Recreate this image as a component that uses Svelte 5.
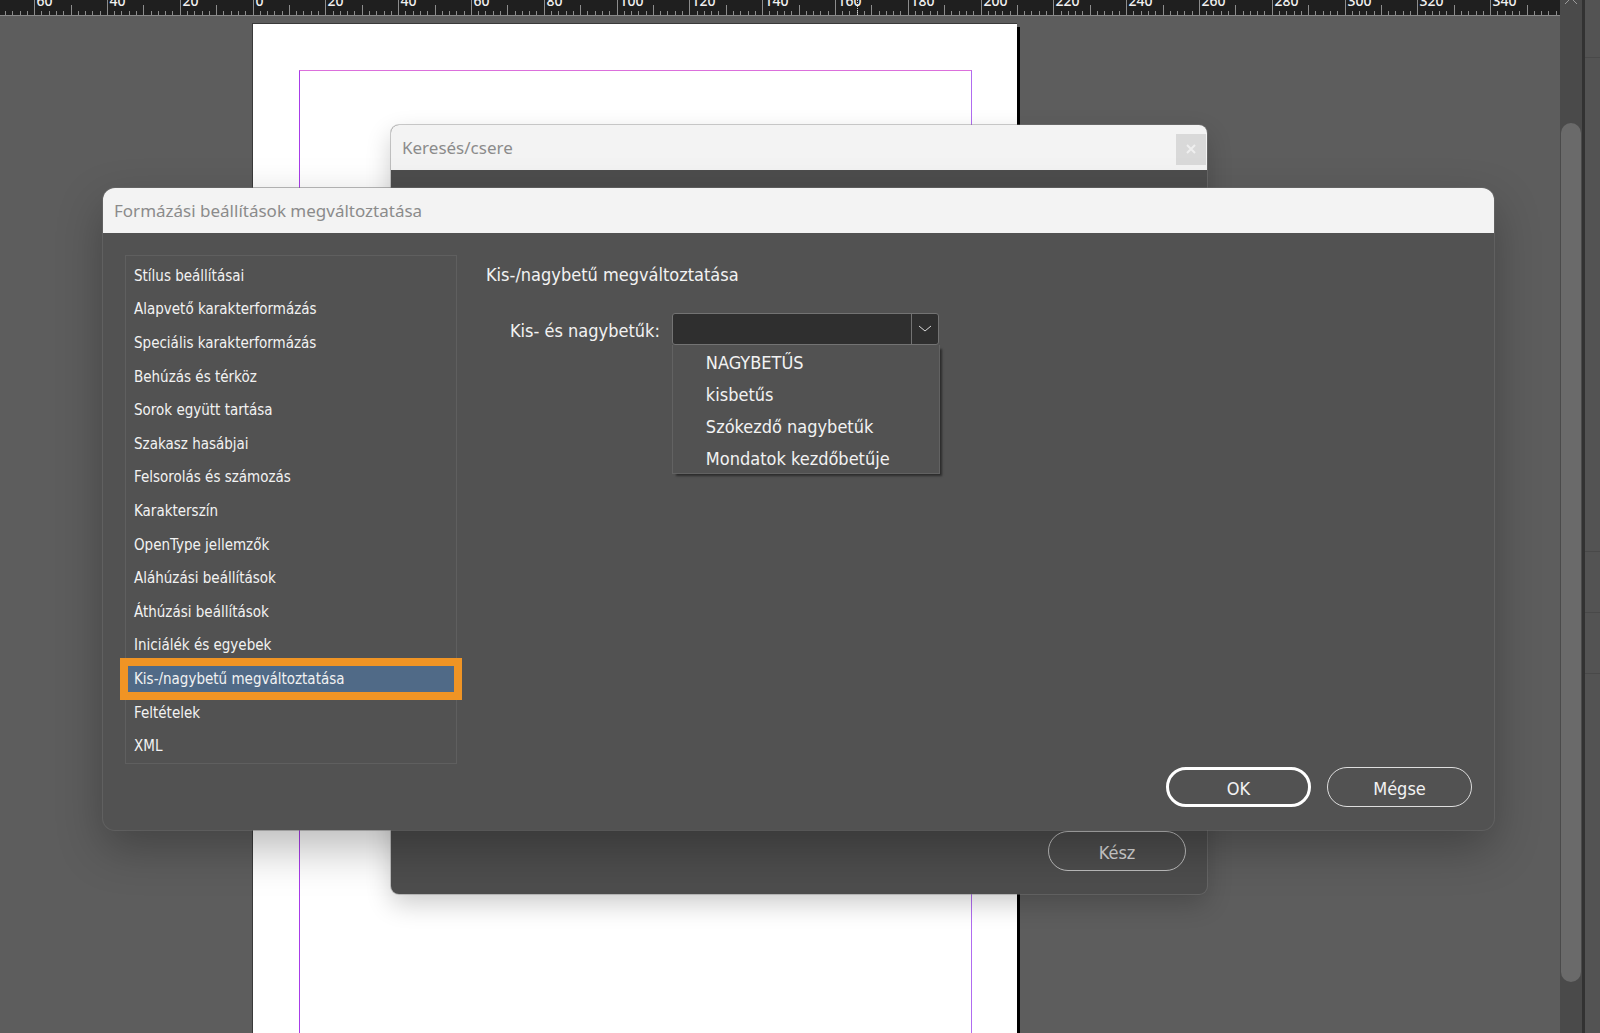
<script lang="ts">
    /** Zero point of the ruler and the distance of one millimetre on screen. */
    const origin = 253;
    const mm = 3.64;

    const majors = Array.from({ length: 21 }, (_, i) => (i - 3) * 20);
    const minors = Array.from({ length: 215 }, (_, i) => (i - 35) * 2);
    const middles = Array.from({ length: 22 }, (_, i) => (i - 3) * 20 - 10);

    const categories = [
        "Stílus beállításai",
        "Alapvető karakterformázás",
        "Speciális karakterformázás",
        "Behúzás és térköz",
        "Sorok együtt tartása",
        "Szakasz hasábjai",
        "Felsorolás és számozás",
        "Karakterszín",
        "OpenType jellemzők",
        "Aláhúzási beállítások",
        "Áthúzási beállítások",
        "Iniciálék és egyebek",
        "Kis-/nagybetű megváltoztatása",
        "Feltételek",
        "XML",
    ];

    const cases = ["NAGYBETŰS", "kisbetűs", "Szókezdő nagybetűk", "Mondatok kezdőbetűje"];

    let selected = $state(12);
    let letterCase = $state("");
    let open = $state(true);

    function tick(value: number) {
        return Math.floor(origin + value * mm) + 0.5;
    }

    function choose(value: string) {
        letterCase = value;
        open = false;
    }
</script>

<div class="app">
    <main class="workspace">
        <svg class="ruler" aria-hidden="true">
            {#each minors as value}
                <line class="tick" x1={tick(value)} x2={tick(value)} y1="11" y2="15" />
            {/each}
            {#each middles as value}
                <line class="tick" x1={tick(value)} x2={tick(value)} y1="5" y2="15" />
            {/each}
            {#each majors as value}
                <line class="tick" x1={tick(value)} x2={tick(value)} y1="0" y2="15" />
                <text x={tick(value) + 2} y="6">{Math.abs(value)}</text>
            {/each}
            <line class="cursor" x1="857.5" x2="857.5" y1="0" y2="15" />
        </svg>
        <div class="pasteboard">
            <div class="page">
                <div class="margins"></div>
            </div>
        </div>
    </main>

    <div class="scrollbar">
        <svg width="14" height="8" viewBox="0 0 14 8" aria-hidden="true">
            <path d="M1 7 7 1l6 6" />
        </svg>
        <div class="thumb"></div>
    </div>
    <aside class="dock">
        <div></div>
        <div></div>
        <div></div>
        <div></div>
    </aside>

    <section class="window find" aria-label="Keresés/csere">
        <header>
            <h2>Keresés/csere</h2>
            <button class="close" aria-label="Bezárás">
                <svg width="10" height="10" viewBox="0 0 10 10"><path d="m1 1 8 8M9 1 1 9" /></svg>
            </button>
        </header>
        <footer>
            <button class="pill">Kész</button>
        </footer>
    </section>

    <section class="window format" aria-label="Formázási beállítások megváltoztatása">
        <header>
            <h2>Formázási beállítások megváltoztatása</h2>
        </header>
        <div class="body">
            <ul class="categories">
                {#each categories as category, i}
                    <li class:selected={selected === i}>
                        <button onclick={() => (selected = i)}>{category}</button>
                    </li>
                {/each}
            </ul>
            <div class="panel">
                <h3>{categories[selected]}</h3>
                <div class="field">
                    <label for="case">Kis- és nagybetűk:</label>
                    <div class="combo">
                        <select id="case" bind:value={letterCase}>
                            <option value=""></option>
                            {#each cases as item}
                                <option>{item}</option>
                            {/each}
                        </select>
                        <span class="arrow">
                            <svg width="14" height="8" viewBox="0 0 14 8" aria-hidden="true">
                                <path d="m1 1 6 5 6-5" />
                            </svg>
                        </span>
                        {#if open}
                            <div class="menu">
                                {#each cases as item}
                                    <button onclick={() => choose(item)}>{item}</button>
                                {/each}
                            </div>
                        {/if}
                    </div>
                </div>
            </div>
        </div>
        <footer>
            <button class="pill primary">OK</button>
            <button class="pill">Mégse</button>
        </footer>
    </section>
</div>

<style>
    :global(body) {
        background: #5d5d5d;
    }

    .app {
        position: relative;
        display: grid;
        grid-template-columns: 1fr 22px 18px;
        height: 100vh;
        overflow: hidden;
        color: #f2f2f2;
        font-family: "DejaVu Sans Condensed", "Noto Sans", sans-serif;
        font-size: 18px;
    }

    h2,
    h3 {
        margin: 0;
        font-weight: 400;
    }

    button,
    select {
        box-sizing: border-box;
        margin: 0;
        color: inherit;
        font: inherit;
    }

    .workspace {
        display: flex;
        flex-direction: column;
        min-width: 0;
    }

    .ruler {
        display: block;
        flex: none;
        box-sizing: border-box;
        width: 100%;
        height: 16px;
        border-bottom: 1px solid #8a8a8a;
        background: #1f1f1f;
    }

    .tick {
        stroke: #8c8c8c;
    }

    .cursor {
        stroke: #d0d0d0;
        stroke-dasharray: 1 1;
    }

    .ruler text {
        fill: #f0f0f0;
        font-family: "Noto Sans", sans-serif;
        font-size: 14px;
        font-weight: 500;
    }

    .pasteboard {
        position: relative;
        flex: 1;
        overflow: hidden;
        background: #5d5d5d;
    }

    .page {
        position: absolute;
        top: 7px;
        bottom: -60px;
        left: 252px;
        box-sizing: border-box;
        width: 765px;
        border: 1px solid #3a3a3a;
        border-right: 0;
        background: #fff;
        box-shadow: 3px 4px 0 #000;
    }

    .margins {
        height: 100%;
        margin: 46px 45px 0 46px;
        border: 1px solid #b06cf0;
        border-top-color: #dc70dc;
        border-left-color: #a83ce8;
    }

    .scrollbar {
        display: flex;
        flex-direction: column;
        align-items: center;
        overflow: hidden;
        background: #4a4a4a;
    }

    .scrollbar svg {
        flex: none;
        margin: -3px 0 118px;
    }

    .thumb {
        flex: 1;
        width: 20px;
        margin-bottom: 51px;
        border-radius: 10px;
        background: #6a6a6a;
    }

    .dock {
        display: grid;
        grid-template-rows: 58px 494px 61px 61px;
        border-left: 3px solid #323232;
        background: #535353;
    }

    .dock div {
        box-sizing: border-box;
        border-bottom: 1px solid #494949;
    }

    svg path {
        fill: none;
        stroke: #9a9a9a;
    }

    .window {
        position: absolute;
        display: flex;
        flex-direction: column;
        overflow: hidden;
        background: #525252;
    }

    .window header {
        display: flex;
        align-items: center;
        justify-content: space-between;
        height: 45px;
        padding: 0 1px 0 11px;
        background: #f3f3f3;
        color: #8b8b8b;
    }

    .window h2 {
        font-family: "Noto Sans", sans-serif;
        font-size: 17px;
        line-height: 24px;
    }

    .window footer {
        display: flex;
        justify-content: flex-end;
        gap: 16px;
        margin-top: auto;
        padding: 0 22px 23px;
    }

    .find {
        top: 125px;
        left: 391px;
        width: 816px;
        min-height: 769px;
        border-radius: 8px;
        background: #4d4d4d;
        box-shadow: 0 0 0 1px rgba(128, 128, 128, 0.4), 0 10px 26px rgba(0, 0, 0, 0.2);
    }

    .find footer {
        padding-right: 21px;
    }

    .find .pill {
        width: 138px;
        border-color: #bdbdbd;
        color: #d6d6d6;
    }

    .close {
        display: grid;
        place-items: center;
        width: 30px;
        height: 31px;
        margin-top: 3px;
        padding: 0;
        border: 0;
        background: #d9d9d9;
    }

    .close path {
        stroke: #efefef;
        stroke-width: 2;
    }

    .format {
        top: 188px;
        right: 106px;
        left: 103px;
        border-radius: 12px;
        box-shadow: 0 0 0 1px rgba(112, 112, 112, 0.5), 0 18px 46px rgba(0, 0, 0, 0.28);
    }

    .body {
        display: flex;
        gap: 29px;
        padding: 22px 22px 3px;
    }

    .categories {
        display: grid;
        grid-auto-rows: 1fr;
        box-sizing: border-box;
        width: 332px;
        height: 509px;
        margin: 0;
        padding: 3px 0 0;
        border: 1px solid #5f5f5f;
        font-size: 15px;
        list-style: none;
    }

    .categories li {
        position: relative;
        display: flex;
        align-items: center;
        padding: 0 2px;
    }

    .categories button {
        width: 100%;
        height: 28px;
        padding: 0 6px;
        border: 0;
        background: none;
        text-align: left;
    }

    .selected button {
        background: #506a87;
    }

    .selected::after {
        position: absolute;
        inset: -4px -6px;
        border: 8px solid #f09424;
        content: "";
        pointer-events: none;
    }

    .panel {
        flex: 1;
        padding-top: 8px;
    }

    .panel h3 {
        font-size: 18px;
        line-height: 24px;
    }

    .field {
        display: flex;
        align-items: center;
        gap: 12px;
        margin-top: 26px;
        padding-left: 24px;
    }

    .field label {
        padding-top: 2px;
    }

    .combo {
        position: relative;
        display: grid;
        width: 267px;
    }

    .combo select {
        grid-area: 1 / 1;
        height: 32px;
        padding: 0 36px 0 8px;
        border: 1px solid #737373;
        border-radius: 3px;
        background: #2f2f2f;
        appearance: none;
    }

    .arrow {
        display: grid;
        grid-area: 1 / 1;
        place-items: center;
        justify-self: end;
        width: 27px;
        margin: 1px 0;
        border-left: 1px solid #737373;
        pointer-events: none;
    }

    .arrow path {
        stroke: #d8d8d8;
    }

    .menu {
        position: absolute;
        top: 32px;
        left: 0;
        display: grid;
        box-sizing: border-box;
        width: 268px;
        border: 1px solid #626262;
        border-top: 0;
        background: #525252;
        box-shadow: 3px 3px 2px -1px #2c2c2c;
    }

    .menu button {
        height: 32px;
        padding: 2px 0 0 33px;
        border: 0;
        background: none;
        text-align: left;
    }

    .pill {
        width: 145px;
        height: 40px;
        padding: 2px 0 0;
        border: 1px solid #dedede;
        border-radius: 20px;
        background: none;
    }

    .primary {
        border: 3px solid #fff;
    }
</style>
